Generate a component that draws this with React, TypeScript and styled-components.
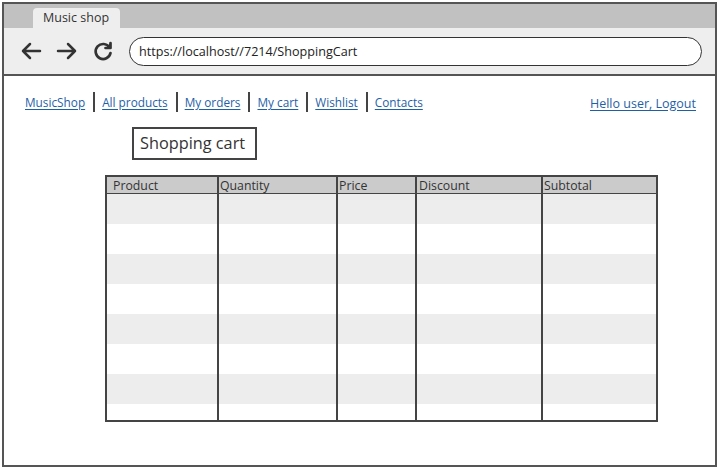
import React from "react";
import styled, { createGlobalStyle } from "styled-components";

const Global = createGlobalStyle`
  html, body { margin: 0; padding: 0; background: #fff; }
  body { font-family: "Open Sans", "Noto Sans", sans-serif; color: #333; }
`;

const Frame = styled.div`
  box-sizing: border-box;
  margin: 2px 0 0 2px;
  width: 715px;
  height: 465px;
  border: 2px solid #555;
  display: flex;
  flex-direction: column;
  overflow: hidden;
`;

const TabBar = styled.div`
  height: 24px;
  background: #c1c1c1;
  display: flex;
  align-items: flex-end;
  padding-left: 29px;
`;

const Tab = styled.div`
  height: 20px;
  width: 87px;
  background: #eeeeee;
  border-radius: 4px 4px 0 0;
  font-size: 12.5px;
  line-height: 20px;
  padding-left: 10px;
  box-sizing: border-box;
  color: #333;
`;

const Toolbar = styled.div`
  height: 48px;
  background: #eeeeee;
  border-bottom: 2px solid #555;
  box-sizing: border-box;
  display: flex;
  align-items: center;
  padding: 0 13px 0 15px;
`;

const NavIcon = styled.svg`
  width: 24px;
  height: 24px;
  margin-right: 12px;
  flex: none;
`;

const AddressBar = styled.div`
  flex: 1;
  height: 29px;
  margin-left: 2px;
  margin-top: 1px;
  background: #fff;
  border: 1.5px solid #333;
  border-radius: 15px;
  box-sizing: border-box;
  display: flex;
  align-items: center;
  padding-left: 9px;
  font-size: 12.6px;
  color: #222;
`;

const Content = styled.div`
  flex: 1;
  display: flex;
  flex-direction: column;
`;

const NavRow = styled.div`
  display: flex;
  align-items: center;
  padding: 15px 19px 0 21px;
  height: 22px;
`;

const Links = styled.div`
  display: flex;
  align-items: center;
  flex: 1;
`;

const NavLink = styled.a`
  color: #1f5fa6;
  font-size: 11.8px;
  text-decoration: underline;
  text-underline-offset: 2px;
  cursor: pointer;
`;

const Separator = styled.span`
  width: 2px;
  height: 20px;
  background: #444;
  margin: 0 7px 0 8px;
`;

const UserLink = styled(NavLink)`
  font-size: 12.5px;
  margin-top: 2px;
`;

const TitleBox = styled.div`
  align-self: flex-start;
  margin: 14px 0 0 128px;
  width: 125px;
  height: 33px;
  border: 2px solid #444;
  box-sizing: border-box;
  font-size: 16.3px;
  line-height: 28px;
  padding-left: 6px;
  color: #333;
`;

const Table = styled.div`
  margin: 15px 0 0 101px;
  width: 553px;
  height: 247px;
  border: 2px solid #444;
  box-sizing: border-box;
  display: grid;
  grid-template-columns: 112px 119px 79px 126px 1fr;
  grid-template-rows: 17px repeat(8, 30px);
  overflow: hidden;
`;

const HeadCell = styled.div<{ $pad: number; $last?: boolean }>`
  background: #cbcbcb;
  border-bottom: 2px solid #444;
  border-right: ${(p) => (p.$last ? "none" : "2px solid #444")};
  font-size: 12.3px;
  line-height: 17px;
  padding-left: ${(p) => p.$pad}px;
  color: #333;
  box-sizing: border-box;
  height: 18px;
`;

const Cell = styled.div<{ $odd: boolean; $last?: boolean }>`
  background: ${(p) => (p.$odd ? "#ededed" : "#ffffff")};
  border-right: ${(p) => (p.$last ? "none" : "2px solid #444")};
`;

const columns = [
  { name: "Product", pad: 6 },
  { name: "Quantity", pad: 1 },
  { name: "Price", pad: 1 },
  { name: "Discount", pad: 2 },
  { name: "Subtotal", pad: 1 },
];

export default function App() {
  const rows = Array.from({ length: 8 }, (_, i) => i);
  return (
    <>
      <Global />
      <Frame>
        <TabBar>
          <Tab>Music shop</Tab>
        </TabBar>
        <Toolbar>
          <NavIcon viewBox="0 0 24 24" fill="none" stroke="#333" strokeWidth="2.5" strokeLinecap="round" strokeLinejoin="round">
            <path d="M21 12H4M11 5l-7 7 7 7" />
          </NavIcon>
          <NavIcon viewBox="0 0 24 24" fill="none" stroke="#333" strokeWidth="2.5" strokeLinecap="round" strokeLinejoin="round">
            <path d="M3 12h17M13 5l7 7-7 7" />
          </NavIcon>
          <NavIcon viewBox="0 0 24 24" fill="none" stroke="#333" strokeWidth="2.7" strokeLinecap="round" strokeLinejoin="round">
            <path d="M18.5 8.5A7.5 7.5 0 1 0 19.5 14" />
            <path d="M19.5 4v5h-5" fill="#333" />
          </NavIcon>
          <AddressBar>https://localhost//7214/ShoppingCart</AddressBar>
        </Toolbar>
        <Content>
          <NavRow>
            <Links>
              <NavLink>MusicShop</NavLink>
              <Separator />
              <NavLink>All products</NavLink>
              <Separator />
              <NavLink>My orders</NavLink>
              <Separator />
              <NavLink>My cart</NavLink>
              <Separator />
              <NavLink>Wishlist</NavLink>
              <Separator />
              <NavLink>Contacts</NavLink>
            </Links>
            <UserLink>Hello user, Logout</UserLink>
          </NavRow>
          <TitleBox>Shopping cart</TitleBox>
          <Table>
            {columns.map((c, i) => (
              <HeadCell key={c.name} $pad={c.pad} $last={i === columns.length - 1}>
                {c.name}
              </HeadCell>
            ))}
            {rows.map((r) =>
              columns.map((c, i) => (
                <Cell key={`${r}-${c.name}`} $odd={r % 2 === 0} $last={i === columns.length - 1} />
              ))
            )}
          </Table>
        </Content>
      </Frame>
    </>
  );
}
